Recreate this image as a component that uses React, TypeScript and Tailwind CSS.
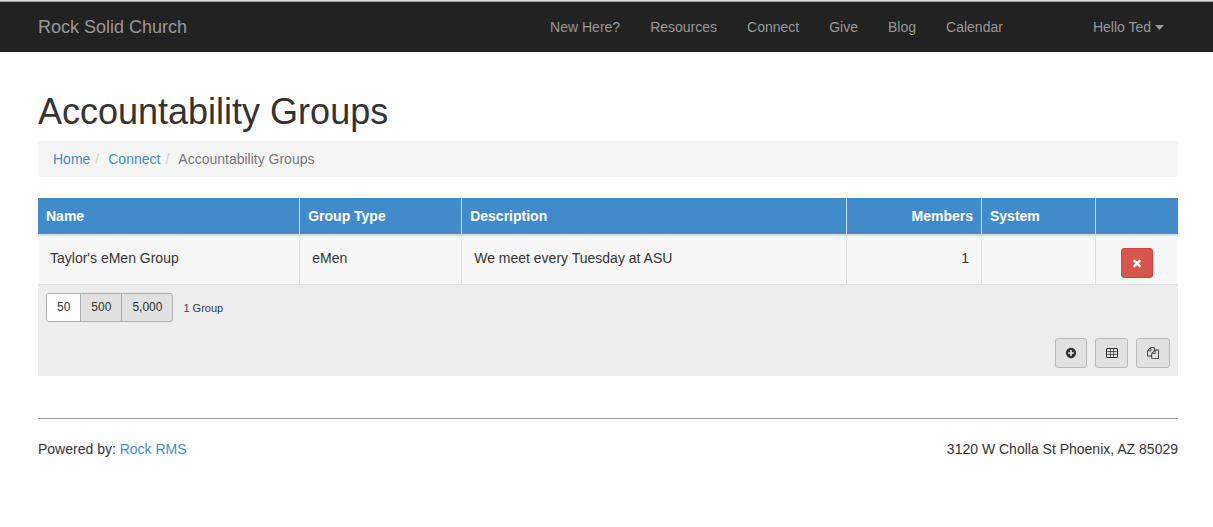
import type { ReactNode } from "react";

const navLinks = ["New Here?", "Resources", "Connect", "Give", "Blog", "Calendar"];

const glyphs = {
  times:
    "M1490 1322q0 40-28 68l-136 136q-28 28-68 28t-68-28l-294-294-294 294q-28 28-68 28t-68-28l-136-136q-28-28-28-68t28-68l294-294-294-294q-28-28-28-68t28-68l136-136q28-28 68-28t68 28l294 294 294-294q28-28 68-28t68 28l136 136q28 28 28 68t-28 68l-294 294 294 294q28 28 28 68z",
  plus:
    "M1344 960v-128q0-26-19-45t-45-19h-256v-256q0-26-19-45t-45-19h-128q-26 0-45 19t-19 45v256h-256q-26 0-45 19t-19 45v128q0 26 19 45t45 19h256v256q0 26 19 45t45 19h128q26 0 45-19t19-45v-256h256q26 0 45-19t19-45zm320-64q0 209-103 385.5t-279.5 279.5-385.5 103-385.5-103-279.5-279.5-103-385.5 103-385.5 279.5-279.5 385.5-103 385.5 103 279.5 279.5 103 385.5z",
  copy:
    "M1696 384q40 0 68 28t28 68v1216q0 40-28 68t-68 28h-960q-40 0-68-28t-28-68v-288h-544q-40 0-68-28t-28-68v-672q0-40 20-88t48-76l408-408q28-28 76-48t88-20h416q40 0 68 28t28 68v328q68-40 128-40h416zm-544 213l-299 299h299v-299zm-640-384l-299 299h299v-299zm196 647l316-316v-416h-384v416q0 40-28 68t-68 28h-416v640h512v-256q0-40 20-88t48-76zm956 804v-1152h-384v416q0 40-28 68t-68 28h-416v640h896z",
};

function Glyph({ d }: { d: string }) {
  return (
    <svg viewBox="0 0 1792 1792" className="size-3" fill="currentColor" aria-hidden="true">
      <path d={d} />
    </svg>
  );
}

function TableGlyph() {
  return (
    <svg viewBox="0 0 12 12" className="size-3" fill="none" stroke="currentColor" aria-hidden="true">
      <rect x="0.5" y="1.5" width="11" height="9" rx="0.5" />
      <path d="M0.5 4.5h11M0.5 7.5h11M4.5 1.5v9M7.5 1.5v9" strokeOpacity="0.75" />
    </svg>
  );
}

function ToolButton({ label, width, children }: { label: string; width: string; children: ReactNode }) {
  return (
    <button
      type="button"
      aria-label={label}
      className={`flex h-[30px] items-center justify-center rounded-[3px] border border-[#b9b9b9] bg-[#e1e1e1] text-[#333] ${width}`}
    >
      {children}
    </button>
  );
}

const th = "border-b-2 border-[#ddd] px-2 py-2 font-bold";
const td = "border-b border-[#ddd] px-3 py-3 align-top";

export default function App() {
  return (
    <div className="font-['Liberation_Sans',Arial,sans-serif] text-sm leading-5 text-[#333]">
      <header className="border-t border-[#d5dada] bg-[#222] text-[#999]">
        <div className="flex h-[51px] items-center border-t border-[#a3a5a5] pr-[49px] pl-[38px]">
          <a href="#" className="text-lg leading-5">
            Rock Solid Church
          </a>
          <nav className="ml-auto flex gap-[30px]">
            {navLinks.map((label) => (
              <a key={label} href="#">
                {label}
              </a>
            ))}
          </nav>
          <button type="button" className="ml-[90px] flex items-center gap-1">
            Hello Ted
            <svg viewBox="0 0 9 5" className="h-[5px] w-[9px]" fill="currentColor" aria-hidden="true">
              <path d="M0 0h9L4.5 5z" />
            </svg>
          </button>
        </div>
      </header>

      <main className="pt-10 pr-[35px] pl-[38px]">
        <h1 className="text-4xl leading-10">Accountability Groups</h1>
        <nav
          aria-label="Breadcrumb"
          className="mt-[9px] flex rounded bg-[#f5f5f5] px-[15px] py-2 text-[#777]"
        >
          <a href="#" className="text-[#428bca]">
            Home
          </a>
          <span className="pr-[9px] pl-[5px] text-[#ccc]">/</span>
          <a href="#" className="text-[#428bca]">
            Connect
          </a>
          <span className="pr-[9px] pl-[5px] text-[#ccc]">/</span>
          <span>Accountability Groups</span>
        </nav>

        <section className="mt-[21px] bg-[#ededed]">
          <table className="w-full table-fixed border-separate border-spacing-0 text-left">
            <colgroup>
              <col className="w-[23%]" />
              <col className="w-[162px]" />
              <col />
              <col className="w-[135px]" />
              <col className="w-[114px]" />
              <col className="w-[82px]" />
            </colgroup>
            <thead className="bg-[#428bca] text-white">
              <tr>
                <th className={`${th} border-r`}>Name</th>
                <th className={`${th} border-r`}>Group Type</th>
                <th className={`${th} border-r`}>Description</th>
                <th className={`${th} border-r text-right`}>Members</th>
                <th className={`${th} border-r`}>System</th>
                <th className={th} aria-label="Actions" />
              </tr>
            </thead>
            <tbody className="bg-[#f7f7f7]">
              <tr>
                <td className={`${td} border-r`}>Taylor's eMen Group</td>
                <td className={`${td} border-r`}>eMen</td>
                <td className={`${td} border-r`}>We meet every Tuesday at ASU</td>
                <td className={`${td} border-r text-right`}>1</td>
                <td className={`${td} border-r`} />
                <td className="border-b border-[#ddd] pt-3 pb-1.5">
                  <button
                    type="button"
                    aria-label="Delete group"
                    className="mx-auto flex h-[30px] w-8 items-center justify-center rounded-[3px] border border-[#d43f3a] bg-[#d9534f] text-white"
                  >
                    <Glyph d={glyphs.times} />
                  </button>
                </td>
              </tr>
            </tbody>
          </table>

          <div className="p-2">
            <div className="flex items-center gap-2.5">
              <div className="flex divide-x divide-[#adadad] overflow-hidden rounded-[3px] border border-[#adadad] bg-[#e1e1e1] text-xs">
                <button type="button" className="bg-[#fdfdfd] px-2.5 py-[5px] leading-[17px]">
                  50
                </button>
                <button type="button" className="px-2.5 py-[5px] leading-[17px]">
                  500
                </button>
                <button type="button" className="px-2.5 py-[5px] leading-[17px]">
                  5,000
                </button>
              </div>
              <span className="text-[11px] text-[#2b3c55]">1 Group</span>
            </div>
            <div className="mt-4 flex justify-end gap-2">
              <ToolButton label="Add group" width="w-8">
                <Glyph d={glyphs.plus} />
              </ToolButton>
              <ToolButton label="Export to spreadsheet" width="w-[33px]">
                <TableGlyph />
              </ToolButton>
              <ToolButton label="Copy groups" width="w-[34px]">
                <Glyph d={glyphs.copy} />
              </ToolButton>
            </div>
          </div>
        </section>

        <footer className="mt-[42px] flex justify-between border-t border-[#999] pt-5">
          <p>
            Powered by:{" "}
            <a href="#" className="text-[#428bca]">
              Rock RMS
            </a>
          </p>
          <address className="not-italic">3120 W Cholla St Phoenix, AZ 85029</address>
        </footer>
      </main>
    </div>
  );
}
